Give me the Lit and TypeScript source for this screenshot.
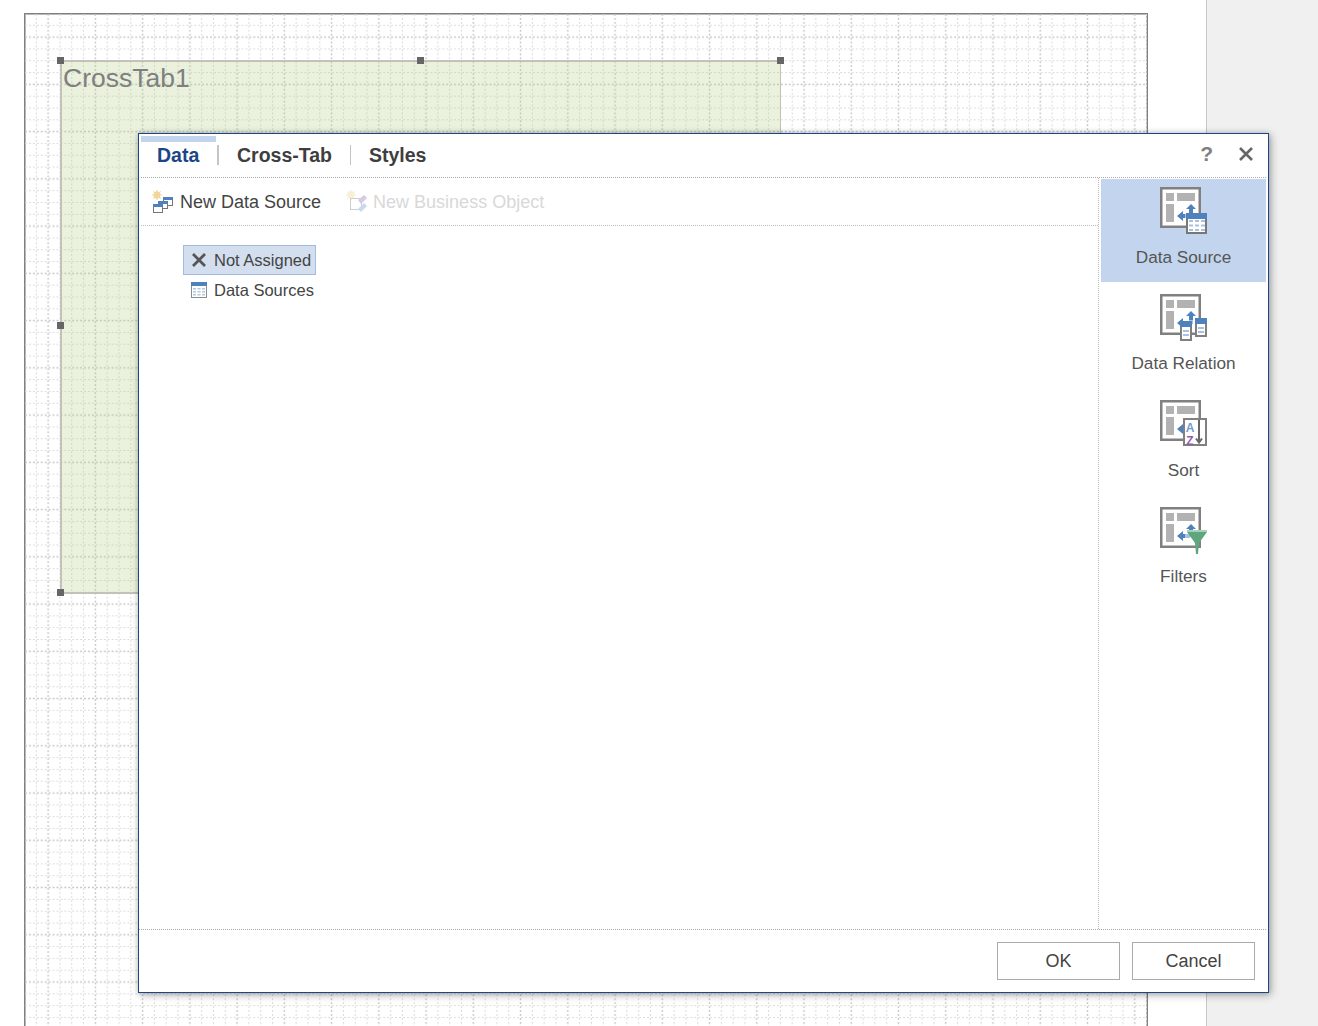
import { LitElement, html, css, svg } from "lit";
import { customElement } from "lit/decorators.js";

const GRAY = "#808080";
const BLUE = "#4f81bd";
const PALE = "#a9c1de";

const base = svg`
  <rect x="1.25" y="1.25" width="38.5" height="38.5" fill="#fff" stroke="${GRAY}" stroke-width="2.5"/>
  <rect x="6" y="6" width="8" height="8" fill="#b2b2b2"/>
  <rect x="17" y="6" width="18" height="8" fill="#b2b2b2"/>
  <rect x="6" y="17" width="8" height="18" fill="#b2b2b2"/>
`;
const arrows = svg`
  <rect x="29" y="22" width="4" height="8" fill="${PALE}"/>
  <rect x="22" y="27" width="8" height="4" fill="${PALE}"/>
  <path d="M31 17l5 5h-3v4h-4v-4h-3z" fill="${BLUE}"/>
  <path d="M17 29l6-5v3h2v4h-2v3z" fill="${BLUE}"/>
`;

const dataSourceIcon = svg`${base}${arrows}
  <rect x="27" y="27" width="19" height="19" fill="#fff" stroke="#777" stroke-width="2"/>
  <rect x="26" y="26" width="21" height="6" fill="${BLUE}"/>
  ${[34, 38.5, 43].map((y) => [29, 35, 41].map((x) => svg`<rect x="${x}" y="${y - 1}" width="4" height="2" fill="${PALE}"/>`))}
`;

const miniTable = (x: number, y: number, h: number) => svg`
  <rect x="${x + 1}" y="${y + 1}" width="10" height="${h - 2}" fill="#fff" stroke="${GRAY}" stroke-width="2"/>
  <rect x="${x}" y="${y}" width="12" height="6" fill="${BLUE}"/>
  <rect x="${x + 3}" y="${y + 9}" width="6" height="2" fill="${PALE}"/>
  <rect x="${x + 3}" y="${y + 13}" width="6" height="2" fill="${PALE}"/>
`;
const dataRelationIcon = svg`${base}${arrows}
  ${miniTable(35, 24, 19)}
  ${miniTable(20, 27, 20)}
`;

const sortIcon = svg`${base}
  <path d="M17 29l6-5v10z" fill="${BLUE}"/>
  <rect x="24" y="19" width="22" height="26" fill="#fff" stroke="${GRAY}" stroke-width="2"/>
  <text x="30" y="31.500" class="letter" fill="#6d9bd1">A</text>
  <text x="30" y="45.300" class="letter" fill="#8a5fa8">Z</text>
  <path d="M39 20v22M36 38.500l3 4 3-4" fill="none" stroke="#666" stroke-width="2"/>
`;

const filtersIcon = svg`${base}${arrows}
  <path d="M27 23h20v2l-8 11-1 11h-2l-1-11-8-11z" fill="#5fa67e"/>
  <rect x="27" y="23" width="20" height="2" fill="#a8d0b8"/>
`;

const iconTiles = [
  { label: "Data Source", icon: dataSourceIcon, selected: true },
  { label: "Data Relation", icon: dataRelationIcon, selected: false },
  { label: "Sort", icon: sortIcon, selected: false },
  { label: "Filters", icon: filtersIcon, selected: false },
];

const sun = svg`<g fill="#f2d59b">
  <circle cx="5" cy="5" r="3.500"/>
  <path d="M4.400 0h1.200v10H4.400zM0 4.400h10v1.200H0zM1 1.800l.8-.8 7.200 7.200-.8.8zM8.200 1l.8.8-7.200 7.200-.8-.8z"/>
</g>`;

@customElement("app-root")
export class AppRoot extends LitElement {
  static styles = css`
    :host {
      display: block;
      width: 1318px;
      height: 1026px;
      overflow: hidden;
      position: relative;
      font-family: "Liberation Sans", Arial, sans-serif;
      color: #444;
      background: #fff;
    }
    .screen { display: flex; width: 1318px; height: 1026px; }
    .workspace { position: relative; width: 1206px; height: 1026px; background: #fff; overflow: hidden; }
    .side-gutter { flex: 1; background: #f0f0f0; border-left: 1px solid #c8c8c8; }

    .page {
      position: absolute; left: 24px; top: 13px; width: 1122px; height: 1031px;
      border: 1px solid #808080; box-shadow: inset 0 0 0 1px #b8b8b8;
    }
    .grid { position: absolute; inset: 0; width: 100%; height: 100%; display: block; }
    .crosstab {
      position: absolute; left: 60px; top: 60px; width: 718px; height: 530px;
      background: rgba(178, 205, 130, 0.27); border: 1px solid #c2c2b8; border-width: 2px 1px 2px 2px;
      box-sizing: content-box;
    }
    .crosstab-title { position: absolute; left: 1px; top: 1px; font-size: 26.500px; line-height: 30px; color: #7f7f7f; }
    .handle { position: absolute; width: 7px; height: 7px; background: #666; }

    .dialog {
      position: absolute; left: 138px; top: 133px; width: 1129px; height: 858px;
      background: #fff; border: 1px solid #1c4587;
      box-shadow: 2px 2px 8px rgba(0, 0, 0, 0.3), 0 0 5px rgba(0, 0, 0, 0.15);
      display: flex; flex-direction: column;
    }
    .header {
      height: 43px; margin: 0 2px; flex: none; border-bottom: 1px dotted #aaa;
      display: flex; align-items: stretch; position: relative;
    }
    .tab {
      padding: 8px 18px 0 18px; font-size: 19.500px; font-weight: bold; color: #3e3e3e;
      line-height: 26px; position: relative;
    }
    .tab.first { padding-left: 16px; width: 42px; border-top: 6px solid transparent; padding-top: 2px; }
    .tab.active { color: #1c4587; }
    .tab.active::before { content: ""; position: absolute; left: 0; top: -4px; width: 75px; height: 6px; background: #c3d5ee; }
    .tab-sep { width: 1px; height: 20px; background: #c4c4c4; margin-top: 11px; }
    .tab-sep.strong { width: 2px; }
    .win-buttons { margin-left: auto; display: flex; align-items: center; gap: 25px; padding: 0 12px 4px 0; }
    .help { font-size: 21px; font-weight: bold; color: #808080; line-height: 24px; }
    .close { width: 16px; height: 16px; display: block; }

    .body { flex: 1; display: flex; min-height: 0; }
    .main { width: 957px; margin-left: 2px; border-right: 1px dotted #bbb; display: flex; flex-direction: column; }
    .toolbar {
      flex: none; border-bottom: 1px dotted #bbb; display: flex; align-items: center;
      gap: 25px; padding: 0 0 0 11px; box-sizing: border-box; height: 48px;
    }
    .tool { display: flex; align-items: center; gap: 6px; font-size: 18px; color: #444; }
    .tool span { padding-top: 2px; }
    .tool.disabled { color: #d8d8d8; gap: 5px; }
    .tool svg { width: 22px; height: 24px; display: block; flex: none; }
    .tool.disabled svg { opacity: 0.4; }

    .tree { padding: 19px 0 0 42px; display: flex; flex-direction: column; align-items: flex-start; }
    .tree-item {
      display: flex; align-items: center; height: 30px; box-sizing: border-box; padding: 0 4px 0 7px;
      gap: 7px; font-size: 16.500px; color: #444; border: 1px solid transparent;
    }
    .tree-item span { padding-top: 1px; margin-top: -1px; }
    .tree-item.selected { background: #d3dfef; border-color: #a3bbdc; }
    .tree-item svg { width: 16px; height: 16px; display: block; flex: none; }

    .sidebar { flex: 1; padding: 1px 2px 0 2px; display: flex; flex-direction: column; }
    .tile {
      height: 106.500px; flex: none; box-sizing: border-box; padding-top: 8px;
      display: flex; flex-direction: column; align-items: center; font-size: 17.200px; color: #555;
    }
    .tile.selected { background: #c3d5ee; height: 103px; margin-bottom: 3.500px; }
    .tile svg { width: 48px; height: 48px; display: block; flex: none; margin-left: 1px; }
    .tile span { margin-top: 11.600px; line-height: 20px; }
    .letter { font: bold 12px "Liberation Sans", Arial, sans-serif; text-anchor: middle; }

    .footer {
      height: 63px; flex: none; border-top: 1px dotted #aaa; margin-right: 2px;
      display: flex; justify-content: flex-end; align-items: flex-start; gap: 12px; padding: 12px 11px 0 0; box-sizing: border-box;
    }
    .btn {
      width: 123px; height: 38px; box-sizing: border-box; border: 1px solid #aaa; background: #fff;
      font: 18px "Liberation Sans", Arial, sans-serif; color: #444; padding: 0;
    }
  `;

  render() {
    const M = 47.244;
    const m = M / 4;
    const dash = `${M / 24} ${M / 24}`;
    return html`
      <div class="screen">
        <div class="workspace">
          <div class="page">
            <svg class="grid">
              <defs>
                <pattern id="g" width="${M}" height="${M}" patternUnits="userSpaceOnUse">
                  ${[1, 3, 4].map((i) => svg`
                    <path d="M${m * i - 0.5} 0V${M}" stroke="#dcdcdc" stroke-width="1.100" stroke-dasharray="${dash}"/>
                    <path d="M0 ${m * i - 0.5}H${M}" stroke="#dcdcdc" stroke-width="1.100" stroke-dasharray="${dash}"/>`)}
                  <path d="M${m * 2 - 0.5} 0V${M}" stroke="#c8c8c8" stroke-width="1.400" stroke-dasharray="${dash}"/>
                  <path d="M0 ${m * 2 - 0.5}H${M}" stroke="#c8c8c8" stroke-width="1.400" stroke-dasharray="${dash}"/>
                </pattern>
              </defs>
              <rect width="100%" height="100%" fill="url(#g)"/>
            </svg>
          </div>
          <div class="crosstab"><div class="crosstab-title">CrossTab1</div></div>
          ${[
            [57, 57], [417, 57], [777, 57],
            [57, 322], [57, 589],
          ].map(([x, y]) => html`<div class="handle" style="left:${x}px;top:${y}px"></div>`)}
        </div>
        <div class="side-gutter"></div>
      </div>

      <div class="dialog">
        <div class="header">
          <div class="tab first active">Data</div>
          <div class="tab-sep strong"></div>
          <div class="tab">Cross-Tab</div>
          <div class="tab-sep"></div>
          <div class="tab">Styles</div>
          <div class="win-buttons">
            <span class="help">?</span>
            <svg class="close" viewBox="0 0 16 16"><path d="M2 2l12 12M14 2L2 14" stroke="#666" stroke-width="2.600" fill="none"/></svg>
          </div>
        </div>
        <div class="body">
          <div class="main">
            <div class="toolbar">
              <div class="tool">
                <svg viewBox="0 0 22 24">${sun}
                  <rect x="11.500" y="7.500" width="9" height="8" fill="#fff" stroke="#777"/><rect x="11" y="7" width="10" height="3" fill="${BLUE}"/>
                  <rect x="6.500" y="11.500" width="9" height="7" fill="#fff" stroke="#777"/><rect x="6" y="11" width="10" height="3" fill="${BLUE}"/>
                  <rect x="1.500" y="14.500" width="9" height="8" fill="#fff" stroke="#777"/><rect x="1" y="14" width="10" height="3" fill="${BLUE}"/>
                </svg>
                <span>New Data Source</span>
              </div>
              <div class="tool disabled">
                <svg viewBox="0 0 22 24">${sun}
                  <rect x="4.500" y="8.500" width="11" height="11" fill="none" stroke="#8a8a8a"/>
                  <path d="M12 10l6-5 3 3-6 6z" fill="#9a7cc0"/>
                  <path d="M12 19l6-6 3 3-6 6z" fill="#7da2d6"/>
                </svg>
                <span>New Business Object</span>
              </div>
            </div>
            <div class="tree">
              <div class="tree-item selected">
                <svg viewBox="0 0 16 16"><path d="M2 2l12 12M14 2L2 14" stroke="#555" stroke-width="2.800" fill="none"/></svg>
                <span>Not Assigned</span>
              </div>
              <div class="tree-item">
                <svg viewBox="0 0 16 16">
                  <rect x=".5" y=".5" width="15" height="15" fill="#fff" stroke="#8c8c8c"/>
                  <rect x="0" y="0" width="16" height="4" fill="${BLUE}"/>
                  ${[6, 9, 12].map((y) => [2, 6.5, 11].map((x) => svg`<rect x="${x}" y="${y}" width="3" height="1.500" fill="#b4c8e2"/>`))}
                </svg>
                <span>Data Sources</span>
              </div>
            </div>
          </div>
          <div class="sidebar">
            ${iconTiles.map((t) => html`
              <div class="tile ${t.selected ? "selected" : ""}">
                <svg viewBox="0 0 48 48">${t.icon}</svg>
                <span>${t.label}</span>
              </div>`)}
          </div>
        </div>
        <div class="footer">
          <button class="btn">OK</button>
          <button class="btn">Cancel</button>
        </div>
      </div>
    `;
  }
}
